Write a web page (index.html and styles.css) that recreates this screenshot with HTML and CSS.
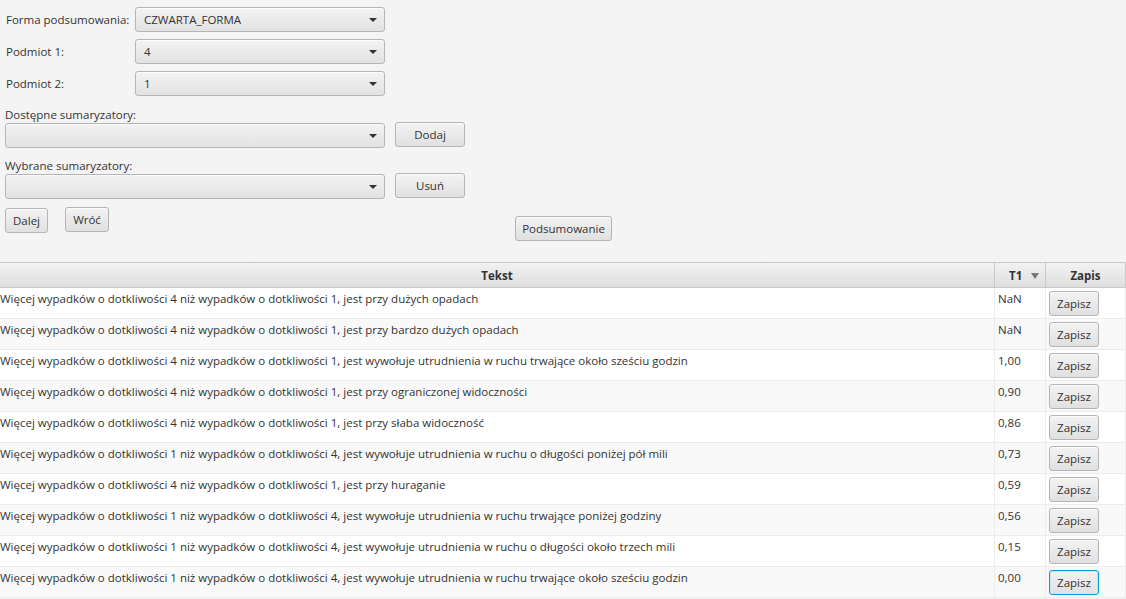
FILE: index.html
```html
<!DOCTYPE html>
<html>
<head>
<meta charset="utf-8">
<link rel="stylesheet" href="styles.css">
</head>
<body>
<div class="form">
  <div class="row">
    <span class="lbl">Forma podsumowania:</span>
    <div class="combo short"><span>CZWARTA_FORMA</span><i class="arrow"></i></div>
  </div>
  <div class="row">
    <span class="lbl">Podmiot 1:</span>
    <div class="combo short"><span>4</span><i class="arrow"></i></div>
  </div>
  <div class="row">
    <span class="lbl">Podmiot 2:</span>
    <div class="combo short"><span>1</span><i class="arrow"></i></div>
  </div>
  <div class="caption first">Dostępne sumaryzatory:</div>
  <div class="row wide">
    <div class="combo long"><span></span><i class="arrow"></i></div>
    <button class="btn side">Dodaj</button>
  </div>
  <div class="caption">Wybrane sumaryzatory:</div>
  <div class="row wide">
    <div class="combo long"><span></span><i class="arrow"></i></div>
    <button class="btn side">Usuń</button>
  </div>
  <div class="actions">
    <button class="btn dalej">Dalej</button>
    <button class="btn wroc">Wróć</button>
    <button class="btn podsum">Podsumowanie</button>
  </div>
</div>

<div class="table">
  <div class="thead">
    <div class="th">Tekst</div>
    <div class="th t1">T1<i class="sort"></i></div>
    <div class="th">Zapis</div>
  </div>
  <div class="tr"><div class="td">Więcej wypadków o dotkliwości 4 niż wypadków o dotkliwości 1, jest przy dużych opadach</div><div class="td num">NaN</div><div class="td act"><button class="btn zap">Zapisz</button></div></div>
  <div class="tr"><div class="td">Więcej wypadków o dotkliwości 4 niż wypadków o dotkliwości 1, jest przy bardzo dużych opadach</div><div class="td num">NaN</div><div class="td act"><button class="btn zap">Zapisz</button></div></div>
  <div class="tr"><div class="td">Więcej wypadków o dotkliwości 4 niż wypadków o dotkliwości 1, jest wywołuje utrudnienia w ruchu trwające około sześciu godzin</div><div class="td num">1,00</div><div class="td act"><button class="btn zap">Zapisz</button></div></div>
  <div class="tr"><div class="td">Więcej wypadków o dotkliwości 4 niż wypadków o dotkliwości 1, jest przy ograniczonej widoczności</div><div class="td num">0,90</div><div class="td act"><button class="btn zap">Zapisz</button></div></div>
  <div class="tr"><div class="td">Więcej wypadków o dotkliwości 4 niż wypadków o dotkliwości 1, jest przy słaba widoczność</div><div class="td num">0,86</div><div class="td act"><button class="btn zap">Zapisz</button></div></div>
  <div class="tr"><div class="td">Więcej wypadków o dotkliwości 1 niż wypadków o dotkliwości 4, jest wywołuje utrudnienia w ruchu o długości poniżej pół mili</div><div class="td num">0,73</div><div class="td act"><button class="btn zap">Zapisz</button></div></div>
  <div class="tr"><div class="td">Więcej wypadków o dotkliwości 4 niż wypadków o dotkliwości 1, jest przy huraganie</div><div class="td num">0,59</div><div class="td act"><button class="btn zap">Zapisz</button></div></div>
  <div class="tr"><div class="td">Więcej wypadków o dotkliwości 1 niż wypadków o dotkliwości 4, jest wywołuje utrudnienia w ruchu trwające poniżej godziny</div><div class="td num">0,56</div><div class="td act"><button class="btn zap">Zapisz</button></div></div>
  <div class="tr"><div class="td">Więcej wypadków o dotkliwości 1 niż wypadków o dotkliwości 4, jest wywołuje utrudnienia w ruchu o długości około trzech mili</div><div class="td num">0,15</div><div class="td act"><button class="btn zap">Zapisz</button></div></div>
  <div class="tr"><div class="td">Więcej wypadków o dotkliwości 1 niż wypadków o dotkliwości 4, jest wywołuje utrudnienia w ruchu trwające około sześciu godzin</div><div class="td num">0,00</div><div class="td act"><button class="btn zap focus">Zapisz</button></div></div>
</div>
</body>
</html>
```

FILE: styles.css
```css
* { box-sizing: border-box; }
html, body { margin: 0; padding: 0; }
body {
  background: #f4f4f4;
  font-family: "Open Sans", "Noto Sans", sans-serif;
  font-size: 11.5px;
  color: #333;
  width: 1126px;
  height: 599px;
  overflow: hidden;
}
.form { padding: 7px 0 0 5px; height: 262px; }
.row { display: flex; align-items: center; height: 25px; margin-bottom: 7px; }
.lbl { width: 130px; padding-left: 1px; }
.combo {
  position: relative;
  height: 25px;
  border: 1px solid #b5b5b5;
  border-radius: 3px;
  background: linear-gradient(#f3f3f3, #e2e2e2);
  box-shadow: inset 0 1px 0 #fbfbfb;
  padding: 0 0 0 8px;
  display: flex;
  align-items: center;
}
.combo.short { width: 250px; }
.combo.long { width: 380px; }
.arrow {
  position: absolute;
  right: 7px;
  top: 10px;
  width: 0; height: 0;
  border-left: 4px solid transparent;
  border-right: 4px solid transparent;
  border-top: 4px solid #333;
}
.caption { height: 17px; line-height: 17px; }
.caption.first { margin-top: 10px; }
.row.wide { margin-bottom: 9px; }
.btn {
  font-family: inherit;
  font-size: 11.5px;
  color: #333;
  height: 25px;
  padding: 0 8px;
  border: 1px solid #b5b5b5;
  border-radius: 3px;
  background: linear-gradient(#f3f3f3, #e0e0e0);
  box-shadow: inset 0 1px 0 #fbfbfb;
  cursor: default;
}
.side { width: 70px; margin-left: 10px; position: relative; top: -1px; }
.actions { display: flex; align-items: flex-start; }
.dalej { width: 43px; padding: 0; }
.wroc { width: 44px; padding: 0; margin-left: 17px; margin-top: -1px; }
.podsum { width: 97px; padding: 0; margin-left: 406px; margin-top: 8px; }

.table { border-top: 1px solid #c8c8c8; background: #fff; }
.thead {
  display: grid;
  grid-template-columns: 995px 51px 80px;
  height: 25px;
  background: linear-gradient(#f2f2f2, #dedede);
  border-bottom: 1px solid #c8c8c8;
}
.th {
  display: flex; align-items: center; justify-content: center;
  font-weight: bold;
  border-right: 1px solid #c8c8c8;
  position: relative;
}
.th.t1 { justify-content: flex-start; padding-left: 14px; }
.sort {
  position: absolute; right: 6px; top: 10px;
  width: 0; height: 0;
  border-left: 4px solid transparent;
  border-right: 4px solid transparent;
  border-top: 6px solid #777;
}
.tr {
  display: grid;
  grid-template-columns: 995px 51px 80px;
  height: 31px;
  background: #fff;
}
.tr:nth-child(odd) { background: #f9f9f9; }
.td {
  border-right: 1px solid #ececec;
  border-bottom: 1px solid #ececec;
  padding: 3px 0 0 0;
  white-space: nowrap;
  overflow: hidden;
  line-height: 16px;
}
.td.num { padding-left: 3px; }
.td.act { padding: 3px 0 0 3px; }
.zap { width: 50px; padding: 0; }
.zap.focus {
  border-color: #039ed3;
  box-shadow: inset 0 0 0 1px #c6e8f5;
}
```
